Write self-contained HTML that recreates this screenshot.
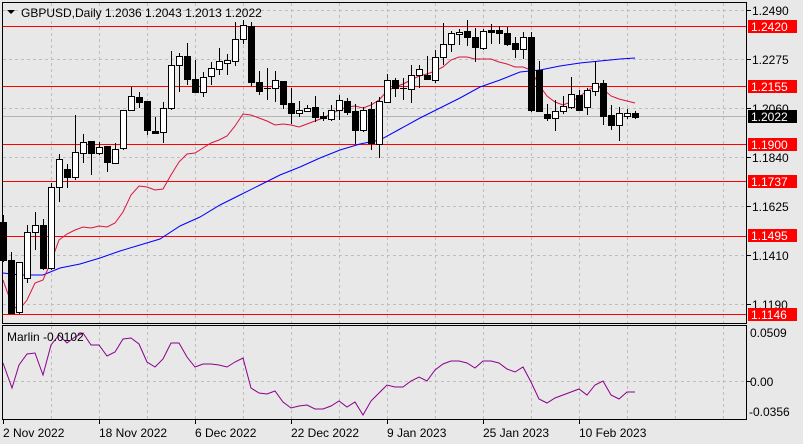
<!DOCTYPE html>
<html><head><meta charset="utf-8"><style>
html,body{margin:0;padding:0;background:#e8e8e8;width:803px;height:444px;overflow:hidden}
svg{display:block;font-family:"Liberation Sans",sans-serif}
text{font-size:12px;fill:#000}
</style></head><body>
<svg width="803" height="444" viewBox="0 0 803 444" shape-rendering="crispEdges">
<rect width="803" height="444" fill="#e8e8e8"/>
<!-- grid -->
<g stroke="#bdbdbd" stroke-dasharray="3,3" stroke-width="1">
<line x1="3" y1="10.5" x2="746" y2="10.5"/><line x1="3" y1="59.5" x2="746" y2="59.5"/><line x1="3" y1="108.5" x2="746" y2="108.5"/><line x1="3" y1="157.5" x2="746" y2="157.5"/><line x1="3" y1="206.5" x2="746" y2="206.5"/><line x1="3" y1="255.5" x2="746" y2="255.5"/><line x1="3" y1="304.5" x2="746" y2="304.5"/>
<line x1="3" y1="381.5" x2="746" y2="381.5"/>
<g id="vg">
<line x1="51.5" y1="3" x2="51.5" y2="323"/><line x1="99.5" y1="3" x2="99.5" y2="323"/><line x1="147.5" y1="3" x2="147.5" y2="323"/><line x1="195.5" y1="3" x2="195.5" y2="323"/><line x1="243.5" y1="3" x2="243.5" y2="323"/><line x1="291.5" y1="3" x2="291.5" y2="323"/><line x1="339.5" y1="3" x2="339.5" y2="323"/><line x1="387.5" y1="3" x2="387.5" y2="323"/><line x1="435.5" y1="3" x2="435.5" y2="323"/><line x1="483.5" y1="3" x2="483.5" y2="323"/><line x1="531.5" y1="3" x2="531.5" y2="323"/><line x1="579.5" y1="3" x2="579.5" y2="323"/><line x1="627.5" y1="3" x2="627.5" y2="323"/><line x1="675.5" y1="3" x2="675.5" y2="323"/><line x1="723.5" y1="3" x2="723.5" y2="323"/>
</g>
<g transform="translate(0,0)">
<line x1="51.5" y1="326" x2="51.5" y2="419"/><line x1="99.5" y1="326" x2="99.5" y2="419"/><line x1="147.5" y1="326" x2="147.5" y2="419"/><line x1="195.5" y1="326" x2="195.5" y2="419"/><line x1="243.5" y1="326" x2="243.5" y2="419"/><line x1="291.5" y1="326" x2="291.5" y2="419"/><line x1="339.5" y1="326" x2="339.5" y2="419"/><line x1="387.5" y1="326" x2="387.5" y2="419"/><line x1="435.5" y1="326" x2="435.5" y2="419"/><line x1="483.5" y1="326" x2="483.5" y2="419"/><line x1="531.5" y1="326" x2="531.5" y2="419"/><line x1="579.5" y1="326" x2="579.5" y2="419"/><line x1="627.5" y1="326" x2="627.5" y2="419"/><line x1="675.5" y1="326" x2="675.5" y2="419"/><line x1="723.5" y1="326" x2="723.5" y2="419"/>
</g>
</g>
<!-- current price line -->
<line x1="3" y1="116.5" x2="746" y2="116.5" stroke="#b4b4b4"/>
<!-- red levels -->
<g stroke="#ff0000" stroke-width="1">
<line x1="3" y1="26.5" x2="746" y2="26.5"/><line x1="3" y1="86.5" x2="746" y2="86.5"/><line x1="3" y1="144.5" x2="746" y2="144.5"/><line x1="3" y1="181.5" x2="746" y2="181.5"/><line x1="3" y1="236.5" x2="746" y2="236.5"/><line x1="3" y1="314.5" x2="746" y2="314.5"/>
</g>
<!-- MAs -->
<polyline fill="none" stroke="#0000ff" shape-rendering="auto" points="3,273 20,275 43,275 60,268 80,264 100,258 120,251 140,245 160,239 180,226 200,217 220,205 240,195 260,185 280,175 300,167 320,158 340,150 360,144 380,140 400,129 420,118 440,108 460,98 480,87 500,80 520,72 540,70 560,66 580,63 600,61 620,59 635,58"/>
<polyline fill="none" stroke="#dc143c" shape-rendering="auto" points="3,280 12,305 19,310 27,300 35,283 43,280 51,262 59,240 67,234 75,230 83,227 91,228 99,226 107,227 115,223 123,212 131,195 139,186 147,187 155,190 163,189 171,175 179,162 187,154 195,153 203,148 211,143 219,140 227,136 235,126 243,114 251,115 259,118 267,121 275,125 283,124 291,125 299,127 307,124 315,121 323,118 331,114 339,110 347,107 355,106 363,108 371,105 379,100 387,91 395,87 403,84 411,80 419,76 427,74 435,71 443,67 451,60 459,57 467,57 475,59 483,59 491,59 499,62 507,64 515,67 523,67 531,70 539,85 547,96 555,102 563,105 571,102 579,97 587,91 595,86 603,89 611,96 619,99 627,101 635,103"/>
<!-- candles -->
<g stroke="#000" stroke-width="1">
<line x1="3.5" y1="215" x2="3.5" y2="262"/><rect x="0.5" y="222.5" width="6" height="38" fill="#000"/>
<line x1="11.5" y1="252" x2="11.5" y2="314"/><rect x="8.5" y="260.5" width="6" height="53" fill="#000"/>
<line x1="19.5" y1="262" x2="19.5" y2="314"/><rect x="16.5" y="262.5" width="6" height="50" fill="#fff"/>
<line x1="27.5" y1="225" x2="27.5" y2="283"/><rect x="24.5" y="232.5" width="6" height="46" fill="#fff"/>
<line x1="35.5" y1="212" x2="35.5" y2="250"/><rect x="32.5" y="225.5" width="6" height="7" fill="#fff"/>
<line x1="43.5" y1="219" x2="43.5" y2="270"/><rect x="40.5" y="225.5" width="6" height="43" fill="#000"/>
<line x1="51.5" y1="183" x2="51.5" y2="270"/><rect x="48.5" y="187.5" width="6" height="81" fill="#fff"/>
<line x1="59.5" y1="154" x2="59.5" y2="202"/><rect x="56.5" y="159.5" width="6" height="28" fill="#fff"/>
<line x1="67.5" y1="164" x2="67.5" y2="188"/><rect x="64.5" y="169.5" width="6" height="8" fill="#000"/>
<line x1="75.5" y1="115" x2="75.5" y2="180"/><rect x="72.5" y="152.5" width="6" height="25" fill="#fff"/>
<line x1="83.5" y1="134" x2="83.5" y2="163"/><rect x="80.5" y="142.5" width="6" height="11" fill="#fff"/>
<line x1="91.5" y1="141" x2="91.5" y2="175"/><rect x="88.5" y="141.5" width="6" height="12" fill="#000"/>
<line x1="99.5" y1="142" x2="99.5" y2="155"/><rect x="96.5" y="147.5" width="6" height="6" fill="#fff"/>
<line x1="107.5" y1="146" x2="107.5" y2="172"/><rect x="104.5" y="146.5" width="6" height="16" fill="#000"/>
<line x1="115.5" y1="143" x2="115.5" y2="163"/><rect x="112.5" y="149.5" width="6" height="14" fill="#fff"/>
<line x1="123.5" y1="110" x2="123.5" y2="150"/><rect x="120.5" y="110.5" width="6" height="38" fill="#fff"/>
<line x1="131.5" y1="87" x2="131.5" y2="111"/><rect x="128.5" y="96.5" width="6" height="14" fill="#fff"/>
<line x1="139.5" y1="92" x2="139.5" y2="108"/><rect x="136.5" y="97.5" width="6" height="5" fill="#000"/>
<line x1="147.5" y1="101" x2="147.5" y2="135"/><rect x="144.5" y="101.5" width="6" height="29" fill="#000"/>
<line x1="155.5" y1="117" x2="155.5" y2="134"/><rect x="152.5" y="131.5" width="6" height="2" fill="#000"/>
<line x1="163.5" y1="102" x2="163.5" y2="143"/><rect x="160.5" y="108.5" width="6" height="24" fill="#fff"/>
<line x1="171.5" y1="51" x2="171.5" y2="110"/><rect x="168.5" y="65.5" width="6" height="43" fill="#fff"/>
<line x1="179.5" y1="53" x2="179.5" y2="92"/><rect x="176.5" y="56.5" width="6" height="9" fill="#fff"/>
<line x1="187.5" y1="43" x2="187.5" y2="85"/><rect x="184.5" y="56.5" width="6" height="23" fill="#000"/>
<line x1="195.5" y1="60" x2="195.5" y2="92"/><rect x="192.5" y="79.5" width="6" height="13" fill="#000"/>
<line x1="203.5" y1="72" x2="203.5" y2="97"/><rect x="200.5" y="77.5" width="6" height="15" fill="#fff"/>
<line x1="211.5" y1="62" x2="211.5" y2="85"/><rect x="208.5" y="68.5" width="6" height="8" fill="#fff"/>
<line x1="219.5" y1="48" x2="219.5" y2="75"/><rect x="216.5" y="61.5" width="6" height="8" fill="#fff"/>
<line x1="227.5" y1="54" x2="227.5" y2="75"/><rect x="224.5" y="60.5" width="6" height="3" fill="#fff"/>
<line x1="235.5" y1="22" x2="235.5" y2="66"/><rect x="232.5" y="39.5" width="6" height="22" fill="#fff"/>
<line x1="243.5" y1="20" x2="243.5" y2="44"/><rect x="240.5" y="25.5" width="6" height="14" fill="#fff"/>
<line x1="251.5" y1="22" x2="251.5" y2="86"/><rect x="248.5" y="26.5" width="6" height="56" fill="#000"/>
<line x1="259.5" y1="71" x2="259.5" y2="95"/><rect x="256.5" y="82.5" width="6" height="9" fill="#000"/>
<line x1="267.5" y1="68" x2="267.5" y2="100"/><line x1="264" y1="88.5" x2="271" y2="88.5"/>
<line x1="275.5" y1="71" x2="275.5" y2="102"/><rect x="272.5" y="80.5" width="6" height="8" fill="#fff"/>
<line x1="283.5" y1="81" x2="283.5" y2="109"/><rect x="280.5" y="81.5" width="6" height="23" fill="#000"/>
<line x1="291.5" y1="88" x2="291.5" y2="124"/><rect x="288.5" y="103.5" width="6" height="10" fill="#000"/>
<line x1="299.5" y1="101" x2="299.5" y2="117"/><rect x="296.5" y="110.5" width="6" height="3" fill="#fff"/>
<line x1="307.5" y1="105" x2="307.5" y2="112"/><rect x="304.5" y="108.5" width="6" height="3" fill="#fff"/>
<line x1="315.5" y1="96" x2="315.5" y2="122"/><rect x="312.5" y="107.5" width="6" height="10" fill="#000"/>
<line x1="323.5" y1="112" x2="323.5" y2="121"/><rect x="320.5" y="116.5" width="6" height="2" fill="#000"/>
<line x1="331.5" y1="105" x2="331.5" y2="121"/><rect x="328.5" y="110.5" width="6" height="9" fill="#fff"/>
<line x1="339.5" y1="95" x2="339.5" y2="120"/><rect x="336.5" y="100.5" width="6" height="10" fill="#fff"/>
<line x1="347.5" y1="98" x2="347.5" y2="115"/><rect x="344.5" y="101.5" width="6" height="11" fill="#000"/>
<line x1="355.5" y1="104" x2="355.5" y2="144"/><rect x="352.5" y="111.5" width="6" height="19" fill="#000"/>
<line x1="363.5" y1="107" x2="363.5" y2="132"/><rect x="360.5" y="110.5" width="6" height="20" fill="#fff"/>
<line x1="371.5" y1="102" x2="371.5" y2="150"/><rect x="368.5" y="109.5" width="6" height="34" fill="#000"/>
<line x1="379.5" y1="97" x2="379.5" y2="158"/><rect x="376.5" y="101.5" width="6" height="43" fill="#fff"/>
<line x1="387.5" y1="74" x2="387.5" y2="103"/><rect x="384.5" y="80.5" width="6" height="22" fill="#fff"/>
<line x1="395.5" y1="78" x2="395.5" y2="97"/><rect x="392.5" y="80.5" width="6" height="8" fill="#000"/>
<line x1="403.5" y1="78" x2="403.5" y2="100"/><line x1="400" y1="88.5" x2="407" y2="88.5"/>
<line x1="411.5" y1="65" x2="411.5" y2="103"/><rect x="408.5" y="75.5" width="6" height="14" fill="#fff"/>
<line x1="419.5" y1="65" x2="419.5" y2="88"/><rect x="416.5" y="69.5" width="6" height="6" fill="#fff"/>
<line x1="427.5" y1="56" x2="427.5" y2="80"/><rect x="424.5" y="75.5" width="6" height="4" fill="#000"/>
<line x1="435.5" y1="50" x2="435.5" y2="83"/><rect x="432.5" y="57.5" width="6" height="23" fill="#fff"/>
<line x1="443.5" y1="23" x2="443.5" y2="65"/><rect x="440.5" y="44.5" width="6" height="13" fill="#fff"/>
<line x1="451.5" y1="31" x2="451.5" y2="52"/><rect x="448.5" y="33.5" width="6" height="11" fill="#fff"/>
<line x1="459.5" y1="29" x2="459.5" y2="45"/><rect x="456.5" y="32.5" width="6" height="2" fill="#fff"/>
<line x1="467.5" y1="20" x2="467.5" y2="46"/><rect x="464.5" y="31.5" width="6" height="6" fill="#000"/>
<line x1="475.5" y1="28" x2="475.5" y2="62"/><rect x="472.5" y="37.5" width="6" height="10" fill="#000"/>
<line x1="483.5" y1="29" x2="483.5" y2="50"/><rect x="480.5" y="31.5" width="6" height="17" fill="#fff"/>
<line x1="491.5" y1="24" x2="491.5" y2="44"/><rect x="488.5" y="30.5" width="6" height="2" fill="#000"/>
<line x1="499.5" y1="26" x2="499.5" y2="44"/><rect x="496.5" y="30.5" width="6" height="3" fill="#000"/>
<line x1="507.5" y1="27" x2="507.5" y2="46"/><rect x="504.5" y="33.5" width="6" height="11" fill="#000"/>
<line x1="515.5" y1="37" x2="515.5" y2="58"/><rect x="512.5" y="43.5" width="6" height="6" fill="#000"/>
<line x1="523.5" y1="32" x2="523.5" y2="59"/><rect x="520.5" y="37.5" width="6" height="12" fill="#fff"/>
<line x1="531.5" y1="32" x2="531.5" y2="112"/><rect x="528.5" y="37.5" width="6" height="73" fill="#000"/>
<line x1="539.5" y1="61" x2="539.5" y2="112"/><rect x="536.5" y="70.5" width="6" height="41" fill="#000"/>
<line x1="547.5" y1="104" x2="547.5" y2="121"/><rect x="544.5" y="114.5" width="6" height="4" fill="#000"/>
<line x1="555.5" y1="100" x2="555.5" y2="131"/><rect x="552.5" y="111.5" width="6" height="7" fill="#fff"/>
<line x1="563.5" y1="96" x2="563.5" y2="114"/><rect x="560.5" y="106.5" width="6" height="5" fill="#fff"/>
<line x1="571.5" y1="77" x2="571.5" y2="109"/><rect x="568.5" y="94.5" width="6" height="13" fill="#fff"/>
<line x1="579.5" y1="90" x2="579.5" y2="111"/><rect x="576.5" y="95.5" width="6" height="15" fill="#000"/>
<line x1="587.5" y1="88" x2="587.5" y2="115"/><rect x="584.5" y="90.5" width="6" height="17" fill="#fff"/>
<line x1="595.5" y1="61" x2="595.5" y2="96"/><rect x="592.5" y="83.5" width="6" height="8" fill="#fff"/>
<line x1="603.5" y1="80" x2="603.5" y2="125"/><rect x="600.5" y="83.5" width="6" height="33" fill="#000"/>
<line x1="611.5" y1="105" x2="611.5" y2="130"/><rect x="608.5" y="115.5" width="6" height="10" fill="#000"/>
<line x1="619.5" y1="107" x2="619.5" y2="141"/><rect x="616.5" y="113.5" width="6" height="12" fill="#fff"/>
<line x1="627.5" y1="109" x2="627.5" y2="119"/><rect x="624.5" y="113.5" width="6" height="3" fill="#fff"/>
<line x1="635.5" y1="111" x2="635.5" y2="119"/><rect x="632.5" y="113.5" width="6" height="4" fill="#000"/>
</g>
<!-- indicator -->
<polyline fill="none" stroke="#8b008b" shape-rendering="auto" points="3,363 12,388 19,365 27,354 35,353 43,375 51,345 59,335 67,343 75,337 83,333 91,345 99,345 107,356 115,352 123,339 131,338 139,344 147,362 155,367 163,359 171,343 179,343 187,357 195,367 203,364 211,364 219,365 227,367 235,362 243,358 251,388 259,393 267,394 275,391 283,402 291,408 299,406 307,405 315,409 323,409 331,406 339,401 347,407 355,402 363,415 371,401 380,392 387,385 395,387 403,387 411,381 419,377 427,381 435,370 443,364 451,361 459,361 467,363 475,368 483,361 491,361 499,363 507,369 515,372 523,367 531,382 539,399 547,403 555,398 563,395 571,392 579,389 587,395 595,385 603,381 611,395 619,399 627,392 635,392"/>
<!-- frames -->
<rect x="2.5" y="2.5" width="744" height="321" fill="none" stroke="#000"/>
<rect x="2.5" y="325.5" width="744" height="94" fill="none" stroke="#000"/>
<!-- axis ticks -->
<g stroke="#000">
<line x1="747" y1="10.5" x2="751" y2="10.5"/><line x1="747" y1="59.5" x2="751" y2="59.5"/><line x1="747" y1="108.5" x2="751" y2="108.5"/><line x1="747" y1="157.5" x2="751" y2="157.5"/><line x1="747" y1="206.5" x2="751" y2="206.5"/><line x1="747" y1="255.5" x2="751" y2="255.5"/><line x1="747" y1="304.5" x2="751" y2="304.5"/>
<line x1="747" y1="381.5" x2="751" y2="381.5"/>
<line x1="3.5" y1="420" x2="3.5" y2="424"/><line x1="99.5" y1="420" x2="99.5" y2="424"/><line x1="195.5" y1="420" x2="195.5" y2="424"/><line x1="291.5" y1="420" x2="291.5" y2="424"/><line x1="387.5" y1="420" x2="387.5" y2="424"/><line x1="483.5" y1="420" x2="483.5" y2="424"/><line x1="579.5" y1="420" x2="579.5" y2="424"/>
</g>
<g>
<text x="752" y="15">1.2490</text>
<text x="752" y="64">1.2275</text>
<text x="752" y="113">1.2060</text>
<text x="752" y="162">1.1840</text>
<text x="752" y="211">1.1625</text>
<text x="752" y="260">1.1410</text>
<text x="752" y="309">1.1190</text>
<text x="750" y="337">0.0509</text>
<text x="750" y="386">0.00</text>
<text x="749" y="416">-0.0356</text>
</g>
<g>
<rect x="748" y="20" width="49" height="13" fill="#ff0000"/><text x="751" y="31" style="fill:#fff">1.2420</text>
<rect x="748" y="80" width="49" height="13" fill="#ff0000"/><text x="751" y="91" style="fill:#fff">1.2155</text>
<rect x="748" y="110" width="49" height="13" fill="#000"/><text x="751" y="121" style="fill:#fff">1.2022</text>
<rect x="748" y="138" width="49" height="13" fill="#ff0000"/><text x="751" y="149" style="fill:#fff">1.1900</text>
<rect x="748" y="175" width="49" height="13" fill="#ff0000"/><text x="751" y="186" style="fill:#fff">1.1737</text>
<rect x="748" y="229" width="49" height="13" fill="#ff0000"/><text x="751" y="240" style="fill:#fff">1.1495</text>
<rect x="748" y="308" width="49" height="13" fill="#ff0000"/><text x="751" y="319" style="fill:#fff">1.1146</text>
</g>
<g>
<text x="3" y="437">2 Nov 2022</text>
<text x="99" y="437">18 Nov 2022</text>
<text x="195" y="437">6 Dec 2022</text>
<text x="291" y="437">22 Dec 2022</text>
<text x="387" y="437">9 Jan 2023</text>
<text x="483" y="437">25 Jan 2023</text>
<text x="579" y="437">10 Feb 2023</text>
</g>
<polygon points="7,10 15,10 11,14" fill="#000" shape-rendering="auto"/>
<text x="21" y="17">GBPUSD,Daily  1.2036 1.2043 1.2013 1.2022</text>
<text x="7" y="341">Marlin -0.0102</text>
</svg>
</body></html>
